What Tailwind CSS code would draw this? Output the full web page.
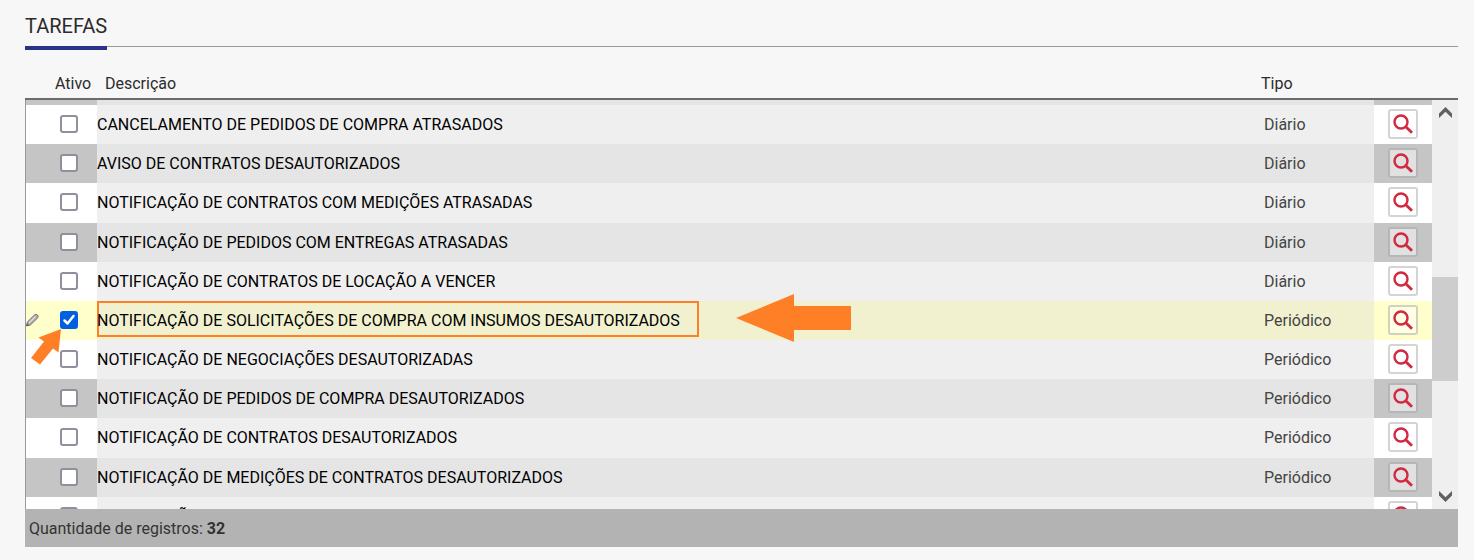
<!DOCTYPE html>
<html lang="pt-BR">
<head>
  <meta charset="UTF-8">
  <meta name="viewport" content="width=device-width, initial-scale=1.0">
  <title>Tarefas</title>
  <script src="https://cdn.jsdelivr.net/npm/@tailwindcss/browser@4"></script>
</head>
<body class="bg-[#f7f7f7] font-[Roboto,sans-serif] text-base text-[#2b2b2b]">
  <main class="pl-[25px] pr-4">
    <!-- Title -->
    <header class="flex h-[50px] items-start">
      <h1 class="h-[50px] w-[82px] whitespace-nowrap border-b-4 border-[#283288] pt-3 text-xl leading-7">TAREFAS</h1>
      <div class="mt-[46px] flex-1 border-t border-[#999999]"></div>
    </header>

    <!-- Column names -->
    <div class="mt-5 border-b-2 border-[#6b6b6b]">
      <table class="w-full table-fixed text-left">
        <thead>
          <tr class="h-7">
            <th class="w-20 p-0 pl-[30px] font-normal">Ativo</th>
            <th class="p-0 font-normal">Descrição</th>
            <th class="w-[197px] p-0 font-normal">Tipo</th>
          </tr>
        </thead>
      </table>
    </div>

    <!-- Scrolling list -->
    <div class="relative flex h-[409px] overflow-hidden border-l border-[#999999]">
      <table class="-mt-[34px] h-[470px] flex-1 table-fixed">
        <colgroup>
          <col class="w-[71px]">
          <col>
          <col class="w-[110px]">
          <col class="w-[58px]">
        </colgroup>
        <tbody id="tasks"></tbody>
      </table>

      <!-- Scrollbar -->
      <div class="relative flex w-[26px] flex-col items-center justify-between bg-[#efefef] py-[7px]">
        <svg class="h-[11px] w-[13px]" viewBox="0 0 13 11" fill="#606060"><path d="M6.500 0 13 6.500V11L6.500 4.700 0 11V6.500Z"/></svg>
        <div class="absolute inset-x-0 top-[177px] h-[104px] bg-[#cdcdcd]"></div>
        <svg class="h-[11px] w-[13px]" viewBox="0 0 13 11" fill="#606060"><path d="M6.500 11 0 4.500V0L6.500 6.300 13 0V4.500Z"/></svg>
      </div>
    </div>

    <!-- Totals -->
    <footer class="flex h-[38px] items-center bg-[#b3b3b3] px-1 pt-0.5 text-[#333333]">
      <p>Quantidade de registros: <b>32</b></p>
    </footer>
  </main>

  <script>
    const tasks = [
      { name: '', type: '' },
      { name: 'CANCELAMENTO DE PEDIDOS DE COMPRA ATRASADOS', type: 'Diário' },
      { name: 'AVISO DE CONTRATOS DESAUTORIZADOS', type: 'Diário' },
      { name: 'NOTIFICAÇÃO DE CONTRATOS COM MEDIÇÕES ATRASADAS', type: 'Diário' },
      { name: 'NOTIFICAÇÃO DE PEDIDOS COM ENTREGAS ATRASADAS', type: 'Diário' },
      { name: 'NOTIFICAÇÃO DE CONTRATOS DE LOCAÇÃO A VENCER', type: 'Diário' },
      { name: 'NOTIFICAÇÃO DE SOLICITAÇÕES DE COMPRA COM INSUMOS DESAUTORIZADOS', type: 'Periódico', active: true },
      { name: 'NOTIFICAÇÃO DE NEGOCIAÇÕES DESAUTORIZADAS', type: 'Periódico' },
      { name: 'NOTIFICAÇÃO DE PEDIDOS DE COMPRA DESAUTORIZADOS', type: 'Periódico' },
      { name: 'NOTIFICAÇÃO DE CONTRATOS DESAUTORIZADOS', type: 'Periódico' },
      { name: 'NOTIFICAÇÃO DE MEDIÇÕES DE CONTRATOS DESAUTORIZADOS', type: 'Periódico' },
      { name: 'NOTIFICAÇÃO', type: '' }
    ];

    const styles = {
      light: { side: 'bg-white', main: 'bg-[#efefef]', button: 'border-[#d4d4d4] bg-white' },
      dark: { side: 'bg-[#c5c5c5]', main: 'bg-[#e5e5e5]', button: 'border-[#b6b6b6] bg-[#e1e1e1]' },
      active: { side: 'bg-[#ffffcc]', main: 'bg-[#f1f1cf]', button: 'border-[#d2d2bc] bg-[#ffffe8]' }
    };

    const pencil = `
      <svg class="absolute left-0 top-[12px] h-[14px] w-[13px]" viewBox="0 0 13 14">
        <path d="M.5 13 1.300 9 8.600 1.800Q10 .7 11.400 2T11.800 4.800L4.400 12Z" fill="#aaaaaa" stroke="#777777"/>
        <path d="M3 10 9.500 3.500" stroke="#dddddd" stroke-width="1.500"/>
        <path d="M.5 13 1 10.500 3 12.400Z" fill="#555555"/>
      </svg>`;

    // Orange pointers drawn over the active row
    const smallArrow = `
      <svg class="pointer-events-none absolute left-[5px] top-[28px] z-10 h-[36px] w-[31px]" viewBox="0 0 31 36" fill="#ff7f27">
        <path d="M30 0 7.500 8.500 13 12.500 0 29 9 35.500 22 19.500 27.500 23.500Z"/>
      </svg>`;
    const bigArrow = `
      <svg class="pointer-events-none absolute -top-[7px] left-[639px] z-10 h-[48px] w-[115px]" viewBox="0 0 115 48" fill="#ff7f27">
        <path d="M0 24 58 0V12H115V36H58V48Z"/>
      </svg>`;

    document.getElementById('tasks').innerHTML = tasks.map((task, i) => {
      const style = task.active ? styles.active : i % 2 ? styles.light : styles.dark;
      return `
        <tr class="align-top">
          <td class="relative p-0 pt-2.5 ${style.side}">
            ${task.active ? pencil + smallArrow : ''}
            <div class="relative ml-[34px] size-[18px]">
              <input type="checkbox" id="task${i}" ${task.active ? 'checked' : ''}
                     class="peer block size-[18px] appearance-none rounded-[3px] border-2 border-[#8f8f9d] bg-white checked:border-[#0060df] checked:bg-[#0060df]">
              <svg class="pointer-events-none absolute inset-0 hidden size-[18px] peer-checked:block" viewBox="0 0 18 18" fill="none" stroke="#ffffff" stroke-width="2.500" stroke-linecap="round" stroke-linejoin="round">
                <path d="M4.500 9.500 7.500 12.500 13.500 5"/>
              </svg>
            </div>
          </td>
          <td class="relative p-0 text-black ${style.main}">
            <label for="task${i}" class="flex h-9 items-center whitespace-nowrap pt-1 ${task.active ? 'w-[602px] inset-ring-2 inset-ring-[#ff7f27]' : 'w-fit'}">${task.name}</label>
            ${task.active ? bigArrow : ''}
          </td>
          <td class="p-0 pt-2 text-[#444444] ${style.main}">${task.type}</td>
          <td class="p-0 pt-1 ${style.side}">
            <button type="button" aria-label="Visualizar" class="mx-auto flex size-[30px] items-center justify-center rounded-[3px] border-2 ${style.button}">
              <svg class="size-5" viewBox="0 0 20 20" fill="none" stroke="#d22840" stroke-width="2.400">
                <circle cx="8" cy="8" r="6.500"/>
                <path d="M12.500 12.500 19 18.800" stroke-width="2.800"/>
              </svg>
            </button>
          </td>
        </tr>`;
    }).join('');
  </script>
</body>
</html>
